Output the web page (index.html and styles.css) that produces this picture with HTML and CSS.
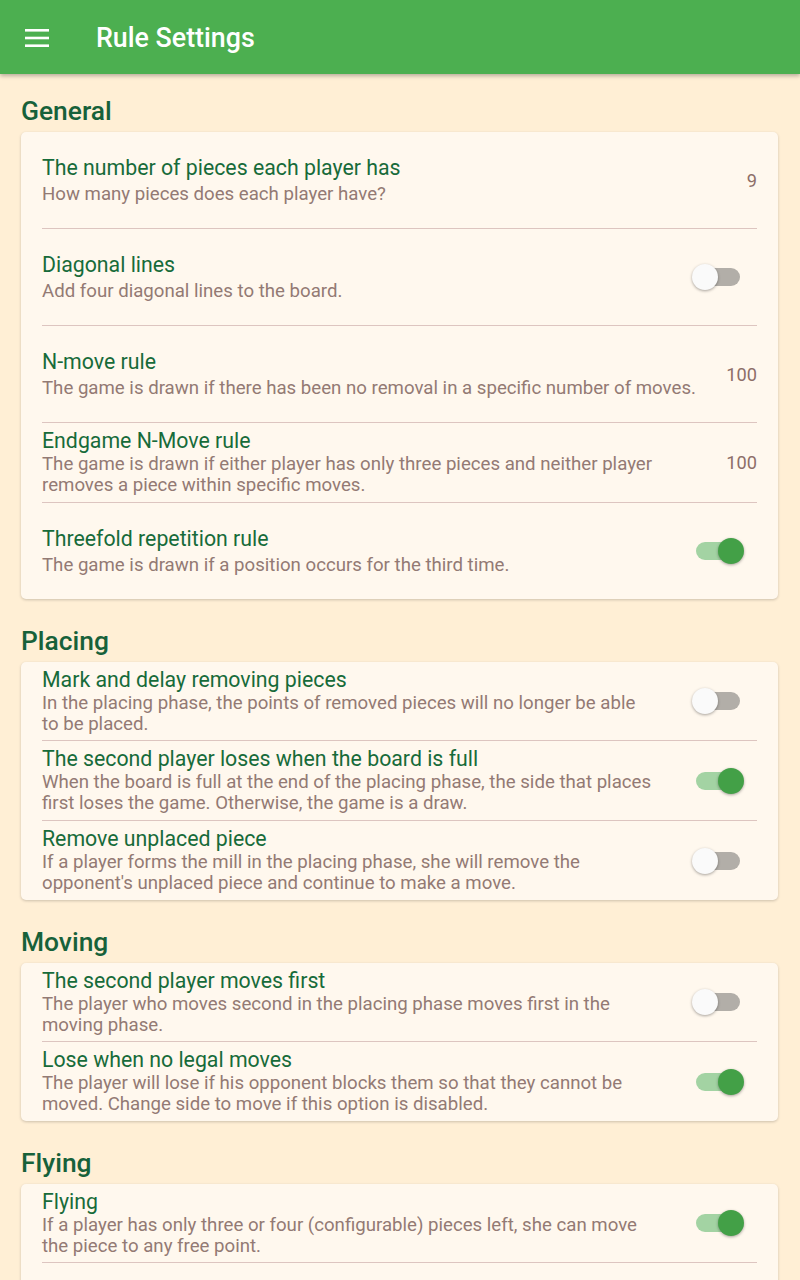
FILE: index.html
```html
<!DOCTYPE html>
<html lang="en">
<head>
<meta charset="utf-8">
<title>Rule Settings</title>
<link rel="stylesheet" href="styles.css">
</head>
<body>
<header class="appbar">
  <svg class="menu" width="24" height="18" viewBox="0 0 24 18" aria-hidden="true">
    <rect x="0" y="0" width="24" height="2.6" fill="#fff"/>
    <rect x="0" y="7.7" width="24" height="2.6" fill="#fff"/>
    <rect x="0" y="15.4" width="24" height="2.6" fill="#fff"/>
  </svg>
  <h1 class="appbar-title">Rule Settings</h1>
</header>

<main class="content">
  <section class="section first">
    <h2 class="section-title">General</h2>
    <div class="card">
      <div class="tile tall">
        <div class="text">
          <div class="title">The number of pieces each player has</div>
          <div class="sub">How many pieces does each player have?</div>
        </div>
        <div class="value">9</div>
      </div>
      <div class="divider"></div>
      <div class="tile tall">
        <div class="text">
          <div class="title">Diagonal lines</div>
          <div class="sub">Add four diagonal lines to the board.</div>
        </div>
        <div class="switch"><span class="track"></span><span class="thumb"></span></div>
      </div>
      <div class="divider"></div>
      <div class="tile tall">
        <div class="text">
          <div class="title">N-move rule</div>
          <div class="sub">The game is drawn if there has been no removal in a specific number of moves.</div>
        </div>
        <div class="value">100</div>
      </div>
      <div class="divider"></div>
      <div class="tile">
        <div class="text">
          <div class="title">Endgame N-Move rule</div>
          <div class="sub">The game is drawn if either player has only three pieces and neither player removes a piece within specific moves.</div>
        </div>
        <div class="value">100</div>
      </div>
      <div class="divider"></div>
      <div class="tile tall">
        <div class="text">
          <div class="title">Threefold repetition rule</div>
          <div class="sub">The game is drawn if a position occurs for the third time.</div>
        </div>
        <div class="switch on"><span class="track"></span><span class="thumb"></span></div>
      </div>
    </div>
  </section>

  <section class="section">
    <h2 class="section-title">Placing</h2>
    <div class="card">
      <div class="tile">
        <div class="text">
          <div class="title">Mark and delay removing pieces</div>
          <div class="sub">In the placing phase, the points of removed pieces will no longer be able to be placed.</div>
        </div>
        <div class="switch"><span class="track"></span><span class="thumb"></span></div>
      </div>
      <div class="divider"></div>
      <div class="tile">
        <div class="text">
          <div class="title">The second player loses when the board is full</div>
          <div class="sub">When the board is full at the end of the placing phase, the side that places first loses the game. Otherwise, the game is a draw.</div>
        </div>
        <div class="switch on"><span class="track"></span><span class="thumb"></span></div>
      </div>
      <div class="divider"></div>
      <div class="tile">
        <div class="text">
          <div class="title">Remove unplaced piece</div>
          <div class="sub">If a player forms the mill in the placing phase, she will remove the opponent's unplaced piece and continue to make a move.</div>
        </div>
        <div class="switch"><span class="track"></span><span class="thumb"></span></div>
      </div>
    </div>
  </section>

  <section class="section">
    <h2 class="section-title">Moving</h2>
    <div class="card">
      <div class="tile">
        <div class="text">
          <div class="title">The second player moves first</div>
          <div class="sub">The player who moves second in the placing phase moves first in the moving phase.</div>
        </div>
        <div class="switch"><span class="track"></span><span class="thumb"></span></div>
      </div>
      <div class="divider"></div>
      <div class="tile">
        <div class="text">
          <div class="title">Lose when no legal moves</div>
          <div class="sub">The player will lose if his opponent blocks them so that they cannot be moved. Change side to move if this option is disabled.</div>
        </div>
        <div class="switch on"><span class="track"></span><span class="thumb"></span></div>
      </div>
    </div>
  </section>

  <section class="section">
    <h2 class="section-title">Flying</h2>
    <div class="card">
      <div class="tile">
        <div class="text">
          <div class="title">Flying</div>
          <div class="sub">If a player has only three or four (configurable) pieces left, she can move the piece to any free point.</div>
        </div>
        <div class="switch on"><span class="track"></span><span class="thumb"></span></div>
      </div>
      <div class="divider"></div>
      <div class="tile">
        <div class="text">
          <div class="title">The number of the flying piece</div>
          <div class="sub">If the number of pieces left is less than or equal to this value, the player can fly.</div>
        </div>
        <div class="value">3</div>
      </div>
    </div>
  </section>
</main>
</body>
</html>
```

FILE: styles.css
```css
* { box-sizing: border-box; }

html, body {
  margin: 0;
  padding: 0;
}

body {
  background: #FFEFD5;
  font-family: Roboto, "Noto Sans", "Liberation Sans", sans-serif;
  width: 800px;
  overflow: hidden;
}

.appbar {
  position: relative;
  z-index: 2;
  height: 74px;
  background: #4CAF50;
  display: flex;
  align-items: center;
  padding-left: 25px;
  box-shadow: 0 2px 4px rgba(0, 0, 0, 0.28);
}

.menu {
  display: block;
  margin-top: 1px;
}

.appbar-title {
  margin: 0 0 0 47px;
  color: #fff;
  font-size: 26.8px;
  font-weight: 500;
  letter-spacing: 0;
  padding-top: 2px;
}

.content {
  padding: 0 22px 0 21px;
}

.section {
  padding-top: 27px;
}

.section.first {
  padding-top: 22px;
}

.section-title {
  margin: 0;
  padding-bottom: 6px;
  font-size: 26.4px;
  line-height: 30px;
  font-weight: 500;
  color: #17613A;
}

.card {
  background: #FFF8EE;
  border-radius: 5px;
  box-shadow: 0 1px 3px rgba(0, 0, 0, 0.2);
}

.tile {
  display: flex;
  align-items: center;
  height: 79px;
  padding: 0 21px;
}

.tile:first-child {
  height: 78px;
}

.tile.tall {
  height: 96px;
}

.text {
  flex: 1;
  min-width: 0;
  padding-bottom: 2px;
}

.tall .text {
  padding-bottom: 0;
  padding-top: 1px;
}

.title {
  font-size: 21.3px;
  line-height: 27px;
  color: #176B3A;
}

.sub {
  font-size: 18.65px;
  line-height: 21px;
  color: #937A74;
}

.tall .sub {
  line-height: 27px;
}

.value {
  margin-left: 21px;
  font-size: 18.2px;
  color: #8D6E68;
}

.divider {
  height: 1px;
  margin: 0 21px;
  background: #DDC5C0;
}

.switch {
  position: relative;
  flex: none;
  width: 77px;
  height: 48px;
  margin-left: 26px;
}

.switch .track {
  position: absolute;
  left: 16px;
  top: 15px;
  width: 44px;
  height: 18px;
  border-radius: 9px;
  background: #B2AEA8;
}

.switch .thumb {
  position: absolute;
  left: 12px;
  top: 11px;
  width: 26px;
  height: 26px;
  border-radius: 50%;
  background: #FAFAFA;
  box-shadow: 0 1px 3px rgba(0, 0, 0, 0.35);
}

.switch.on .track {
  background: #A3D3A3;
}

.switch.on .thumb {
  left: 38px;
  background: #43A047;
}
```
